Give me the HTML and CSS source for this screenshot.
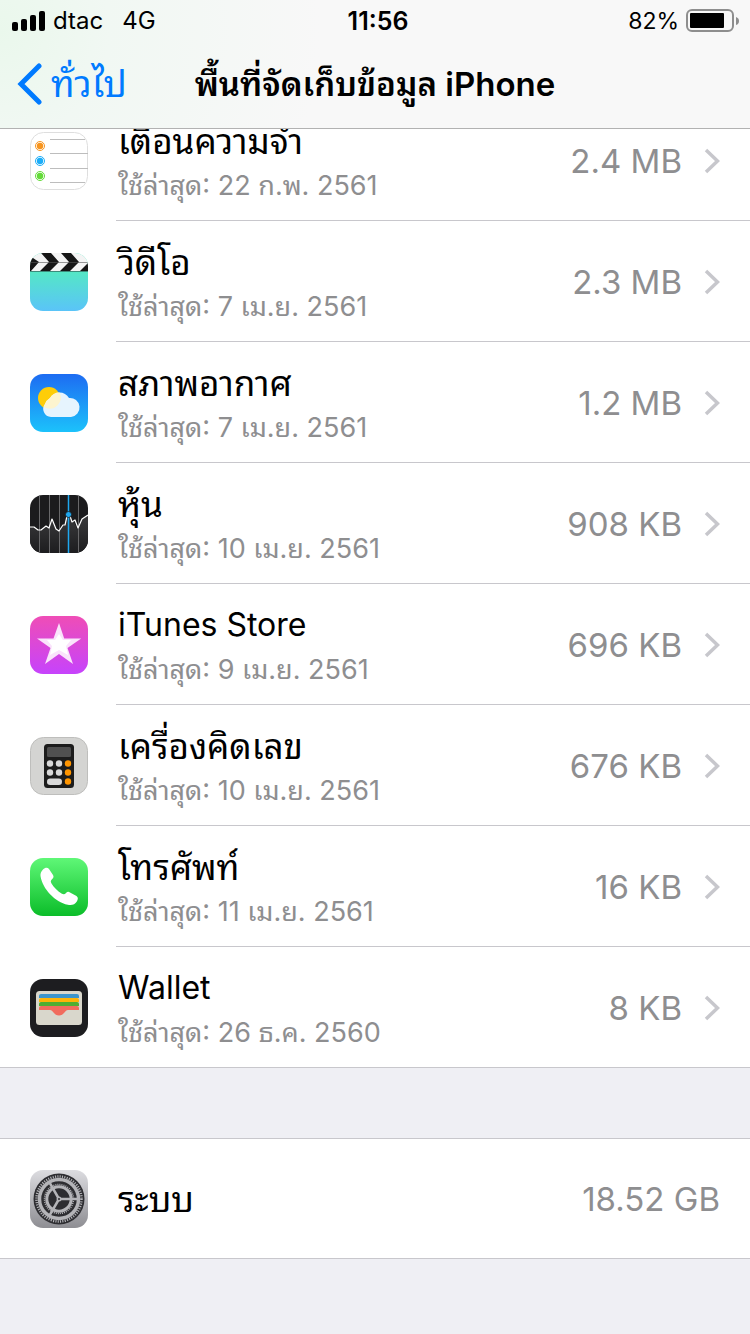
FILE: index.html
```html
<!DOCTYPE html>
<html lang="th">
<head>
<meta charset="utf-8">
<meta name="viewport" content="width=device-width, initial-scale=1">
<title>พื้นที่จัดเก็บข้อมูล iPhone</title>
<link rel="stylesheet" href="styles.css">
</head>
<body>
<svg class="defs" width="0" height="0" aria-hidden="true">
  <defs>
    <symbol id="chevron" viewBox="0 0 16 26"><path d="M2 2l11.500 11L2 24" fill="none" stroke="#c7c7cc" stroke-width="3.500"/></symbol>
    <linearGradient id="g-video" x2="0" y2="1"><stop offset=".3" stop-color="#54e8c4"/><stop offset="1" stop-color="#5ac4f8"/></linearGradient>
    <linearGradient id="g-weather" x2="0" y2="1"><stop stop-color="#1d6cf2"/><stop offset="1" stop-color="#1cc2fb"/></linearGradient>
    <linearGradient id="g-stocks" x2="0" y2="1"><stop stop-color="#3a3a3c"/><stop offset="1" stop-color="#1d1d1f"/></linearGradient>
    <linearGradient id="g-itunes" x2="0" y2="1"><stop stop-color="#ef4db6"/><stop offset="1" stop-color="#c643fc"/></linearGradient>
    <linearGradient id="g-phone" x2="0" y2="1"><stop stop-color="#5ff777"/><stop offset="1" stop-color="#0bbd29"/></linearGradient>
    <linearGradient id="g-gear" x2="0" y2="1"><stop stop-color="#dcdce0"/><stop offset="1" stop-color="#8e8e93"/></linearGradient>
    <clipPath id="tile"><rect width="58" height="58" rx="13"/></clipPath>
  </defs>
</svg>

<header class="topbar">
  <div class="status">
    <div class="status-left">
      <svg class="signal" viewBox="0 0 34 20" aria-hidden="true"><rect y="11" width="6" height="9" rx="2"/><rect x="9" y="8" width="6" height="12" rx="2"/><rect x="18" y="4" width="6" height="16" rx="2"/><rect x="27" width="6" height="20" rx="2"/></svg>
      <span>dtac</span><span class="network">4G</span>
    </div>
    <span class="clock">11:56</span>
    <div class="status-right">
      <span>82%</span>
      <svg class="battery" viewBox="0 0 54 24" aria-hidden="true"><rect x="1" y="1" width="46" height="21" rx="5" fill="none" stroke="#8e8e8e" stroke-width="2"/><rect x="4" y="4" width="34" height="15" rx="1"/><path d="M50 8q3 1 3 4t-3 4z" fill="#8e8e8e"/></svg>
    </div>
  </div>
  <nav class="nav">
    <button class="back" type="button">
      <svg class="back-arrow" viewBox="0 0 26 42" aria-hidden="true"><path d="M23 3L5 21l18 18" fill="none" stroke="#007aff" stroke-width="5" stroke-linecap="round" stroke-linejoin="miter"/></svg>
      <span>ทั่วไป</span>
    </button>
    <h1 class="title">พื้นที่จัดเก็บข้อมูล iPhone</h1>
  </nav>
</header>

<main>
  <ul class="apps">
    <li><a class="row" href="#reminders">
      <svg class="icon" viewBox="0 0 58 58" aria-hidden="true"><rect x=".5" y=".5" width="57" height="57" rx="13" fill="#fff" stroke="#dedede"/><path d="M20 7.500h35M20 21.500h38M20 36.500h38M20 50.500h35" stroke="#bdbdbd"/><g fill="#fff" stroke-width="1"><circle cx="10" cy="14" r="4.500" stroke="#f7941e"/><circle cx="10" cy="29" r="4.500" stroke="#1badf8"/><circle cx="10" cy="44" r="4.500" stroke="#63da38"/></g><circle cx="10" cy="14" r="3.200" fill="#f7941e"/><circle cx="10" cy="29" r="3.200" fill="#1badf8"/><circle cx="10" cy="44" r="3.200" fill="#63da38"/></svg>
      <span class="body"><span class="text"><span class="name">เตือนความจำ</span><span class="used">ใช้ล่าสุด: 22 ก.พ. 2561</span></span><span class="size">2.4 MB</span><svg class="chevron" aria-hidden="true"><use href="#chevron"/></svg></span>
    </a></li>
    <li><a class="row" href="#videos">
      <svg class="icon" viewBox="0 0 58 58" aria-hidden="true"><g clip-path="url(#tile)"><rect width="58" height="58" fill="url(#g-video)"/><rect width="58" height="18" fill="#f4f4f4"/><path d="M0 3L9 9 1 18H0zM11 0h10l8 9-9 9H10l9-9zM31 0h10l8 9-9 9H30l9-9zM58 10v8h-8z" fill="#161616"/><path d="M0 9.500h58" stroke="#555" stroke-width=".6"/><path d="M0 18.500h58" stroke="#3c8c7c"/></g></svg>
      <span class="body"><span class="text"><span class="name">วิดีโอ</span><span class="used">ใช้ล่าสุด: 7 เม.ย. 2561</span></span><span class="size">2.3 MB</span><svg class="chevron" aria-hidden="true"><use href="#chevron"/></svg></span>
    </a></li>
    <li><a class="row" href="#weather">
      <svg class="icon" viewBox="0 0 58 58" aria-hidden="true"><rect width="58" height="58" rx="13" fill="url(#g-weather)"/><circle cx="19" cy="24" r="11" fill="#fecd08"/><path d="M21 43a8 8 0 0 1-6-13 12 12 0 0 1 5-6 11 11 0 0 1 19 0 9.500 9.500 0 0 1 2 19z" fill="#e6f4fe"/><path d="M15 33.500a11 11 0 0 0 14.500-15 11 11 0 0 0-9.500 5.500 12 12 0 0 0-5 6q-1.500 2-1 3.500z" fill="#fdf4cf"/></svg>
      <span class="body"><span class="text"><span class="name">สภาพอากาศ</span><span class="used">ใช้ล่าสุด: 7 เม.ย. 2561</span></span><span class="size">1.2 MB</span><svg class="chevron" aria-hidden="true"><use href="#chevron"/></svg></span>
    </a></li>
    <li><a class="row" href="#stocks">
      <svg class="icon" viewBox="0 0 58 58" aria-hidden="true"><g clip-path="url(#tile)"><rect width="58" height="58" fill="#1b1b1d"/><path d="M0 32h4l4 3h3l5-4 3 1 3-8 4 10 3 2 4-5h2l2-10h2l3 6h2l3 7 4-9 7-5v38H0z" fill="url(#g-stocks)"/><path d="M9.500 0v58M19.500 0v58M29.500 0v58M48.500 0v58" stroke="#68686a"/><path d="M38.500 0v58" stroke="#1fa8f0" stroke-width="1.500"/><path d="M0 32h4l4 3h3l5-4 3 2 3-9 4 10 3 2 4-6h2l2-9h3l2 6 3-2 3 8 4-9 6-4" fill="none" stroke="#fff" stroke-width="1.200" stroke-linejoin="round"/><circle cx="38.500" cy="19.500" r="3" fill="#1fa8f0" stroke="#1b1b1d" stroke-width=".8"/></g></svg>
      <span class="body"><span class="text"><span class="name">หุ้น</span><span class="used">ใช้ล่าสุด: 10 เม.ย. 2561</span></span><span class="size">908 KB</span><svg class="chevron" aria-hidden="true"><use href="#chevron"/></svg></span>
    </a></li>
    <li><a class="row" href="#itunes">
      <svg class="icon" viewBox="0 0 58 58" aria-hidden="true"><rect width="58" height="58" rx="13" fill="url(#g-itunes)"/><path d="M29 7l5.200 15.500 17 0-13.700 9.500L43 48 29 38 15 48l5.500-16L7 22.500h16.500z" fill="#fae3fb"/><path d="M29 18l4 6 8 0-5 6 2 9-9-5-9 5 2-9-5-6 8 0z" fill="#fff"/></svg>
      <span class="body"><span class="text"><span class="name latin">iTunes Store</span><span class="used">ใช้ล่าสุด: 9 เม.ย. 2561</span></span><span class="size">696 KB</span><svg class="chevron" aria-hidden="true"><use href="#chevron"/></svg></span>
    </a></li>
    <li><a class="row" href="#calculator">
      <svg class="icon" viewBox="0 0 58 58" aria-hidden="true"><rect x=".5" y=".5" width="57" height="57" rx="13" fill="#d4d4d2" stroke="#bebebc"/><rect x="14" y="7" width="30" height="44" rx="3.500" fill="#1c1c1c"/><rect x="17" y="10" width="24" height="10" rx="1.500" fill="#505050"/><g fill="#d9d9d9"><circle cx="20" cy="26.500" r="3.200"/><circle cx="29" cy="26.500" r="3.200"/><circle cx="20" cy="35.500" r="3.200"/><circle cx="29" cy="35.500" r="3.200"/><rect x="17" y="41.500" width="15" height="6.400" rx="3.200"/></g><g fill="#ff9500"><circle cx="38" cy="26.500" r="3.200"/><circle cx="38" cy="35.500" r="3.200"/><circle cx="38" cy="44.500" r="3.200"/></g></svg>
      <span class="body"><span class="text"><span class="name">เครื่องคิดเลข</span><span class="used">ใช้ล่าสุด: 10 เม.ย. 2561</span></span><span class="size">676 KB</span><svg class="chevron" aria-hidden="true"><use href="#chevron"/></svg></span>
    </a></li>
    <li><a class="row" href="#phone">
      <svg class="icon" viewBox="0 0 58 58" aria-hidden="true"><rect width="58" height="58" rx="13" fill="url(#g-phone)"/><path d="M13 11.500c2-2 4.500-2.500 6-.5l4 6c1 1.800.5 3-1 4.200-1.500 1.300-1.500 2.500-.5 4.300 2.500 4 6 7.500 10 10 2 1.200 3.300 1 4.500-.5 1.200-1.300 2.500-1.500 4-.6l6.500 3.600c2 1.300 1.500 3.500.3 5.500-1.800 3-5 4.200-9 3.300C25 44 12.500 31 10.500 18c-.3-2.500.7-4.800 2.500-6.500z" fill="#fff"/></svg>
      <span class="body"><span class="text"><span class="name">โทรศัพท์</span><span class="used">ใช้ล่าสุด: 11 เม.ย. 2561</span></span><span class="size">16 KB</span><svg class="chevron" aria-hidden="true"><use href="#chevron"/></svg></span>
    </a></li>
    <li><a class="row" href="#wallet">
      <svg class="icon" viewBox="0 0 58 58" aria-hidden="true"><rect width="58" height="58" rx="13" fill="#1d1d20"/><rect x="6" y="12" width="46" height="34" rx="3.500" fill="#d9d7cc"/><path d="M9 19v-2q0-2 2-2h36q2 0 2 2v2z" fill="#3c95cc"/><path d="M9 23v-2q0-2 2-2h36q2 0 2 2v2z" fill="#fdb409"/><path d="M9 27v-2q0-2 2-2h36q2 0 2 2v2z" fill="#4fae32"/><path d="M9 31v-2q0-2 2-2h36q2 0 2 2v2H38c-3 0-4 5.500-9 5.500S23 31 20 31z" fill="#f16c5e"/></svg>
      <span class="body"><span class="text"><span class="name latin">Wallet</span><span class="used">ใช้ล่าสุด: 26 ธ.ค. 2560</span></span><span class="size">8 KB</span><svg class="chevron" aria-hidden="true"><use href="#chevron"/></svg></span>
    </a></li>
  </ul>

  <section class="system">
    <svg class="icon" viewBox="0 0 58 58" aria-hidden="true"><rect width="58" height="58" rx="13" fill="url(#g-gear)"/><circle cx="29" cy="29" r="25.500" fill="#2d2d31"/><g fill="none" stroke="#b4b4b8"><circle cx="29" cy="29" r="22.500" stroke-width="2.500" stroke-dasharray="1.100 1.256"/><circle cx="29" cy="29" r="19.500" stroke-width="3.500"/><circle cx="29" cy="29" r="14.500" stroke-width="1.500" stroke-dasharray="1 1.070"/><circle cx="29" cy="29" r="12.200" stroke-width="3"/><path d="M29 29L19 11.700M29 29L19 46.300M29 29h20" stroke-width="2.500"/></g><circle cx="29" cy="29" r="2.500" fill="#b4b4b8"/><circle cx="29" cy="29" r="1" fill="#2d2d31"/></svg>
    <span class="body"><span class="text name">ระบบ</span><span class="size">18.52 GB</span></span>
  </section>
</main>
</body>
</html>
```
FILE: styles.css
```css
* { box-sizing: border-box; }

body {
  margin: 0;
  min-height: 100vh;
  overflow-x: hidden;
  background: #efeff4;
  color: #000;
  font-family: Inter, "Noto Sans Thai Looped", Loma, Sarabun, "Noto Sans Thai", "Noto Sans", "Liberation Sans", sans-serif;
}

.defs { position: absolute; }

.topbar {
  position: relative;
  z-index: 1;
  border-bottom: 1px solid #b2b2b2;
  background: radial-gradient(circle at 0 30px, #eaf8ec, #f1f8f3 110px, #f8f8f8 320px);
}

.status {
  display: grid;
  grid-template-columns: 1fr auto 1fr;
  align-items: center;
  height: 40px;
  padding: 1px 10px 0 12px;
  font-size: 24px;
  line-height: 28px;
}

.status-left, .status-right { display: flex; align-items: center; gap: 7px; }
.status-right { justify-content: flex-end; font-size: 23px; }
.signal { width: 34px; height: 20px; }
.network { margin-left: 12px; }
.clock { padding-left: 4px; font-size: 25px; font-weight: 600; }
.battery { width: 54px; height: 24px; }

.nav {
  display: grid;
  grid-template-columns: 1fr auto 1fr;
  align-items: center;
  height: 88px;
  padding: 0 16px;
}

.back {
  display: flex;
  align-items: center;
  gap: 9px;
  padding: 0;
  border: 0;
  background: none;
  color: #007aff;
  font: inherit;
  font-size: 36px;
  line-height: 44px;
}

.back-arrow { width: 26px; height: 42px; }

.title {
  margin: 0;
  font-size: 33px;
  line-height: 44px;
  font-weight: 600;
}

.apps {
  margin: -29px 0 0;
  padding: 0;
  list-style: none;
  background: #fff;
  border-bottom: 1px solid #c8c7cc;
}

.row, .system {
  display: flex;
  align-items: center;
  gap: 28px;
  padding-left: 30px;
  background: #fff;
  color: inherit;
  text-decoration: none;
}

.row { padding-top: 1px; }

.icon { flex: none; width: 58px; height: 58px; }

.body {
  flex: 1;
  display: flex;
  align-items: center;
  min-width: 0;
  min-height: 120px;
  padding: 0 30px 0 2px;
  border-bottom: 1px solid #c8c7cc;
}

li:last-child .body { min-height: 119px; border-bottom: 0; }

.text { flex: 1; min-width: 0; padding-top: 5px; }
.name, .used { display: block; }
.name { font-size: 35px; line-height: 46px; }
.latin { font-size: 32px; }
.used { color: #8e8e90; font-size: 27px; line-height: 44px; }
.size { color: #8e8e90; font-size: 33px; line-height: 44px; }
.chevron { width: 16px; height: 26px; margin-left: 22px; }

.system {
  margin-top: 70px;
  border-top: 1px solid #c8c7cc;
  border-bottom: 1px solid #c8c7cc;
}

.system .body { min-height: 119px; border-bottom: 0; }
.system .text { padding-top: 0; }
```
